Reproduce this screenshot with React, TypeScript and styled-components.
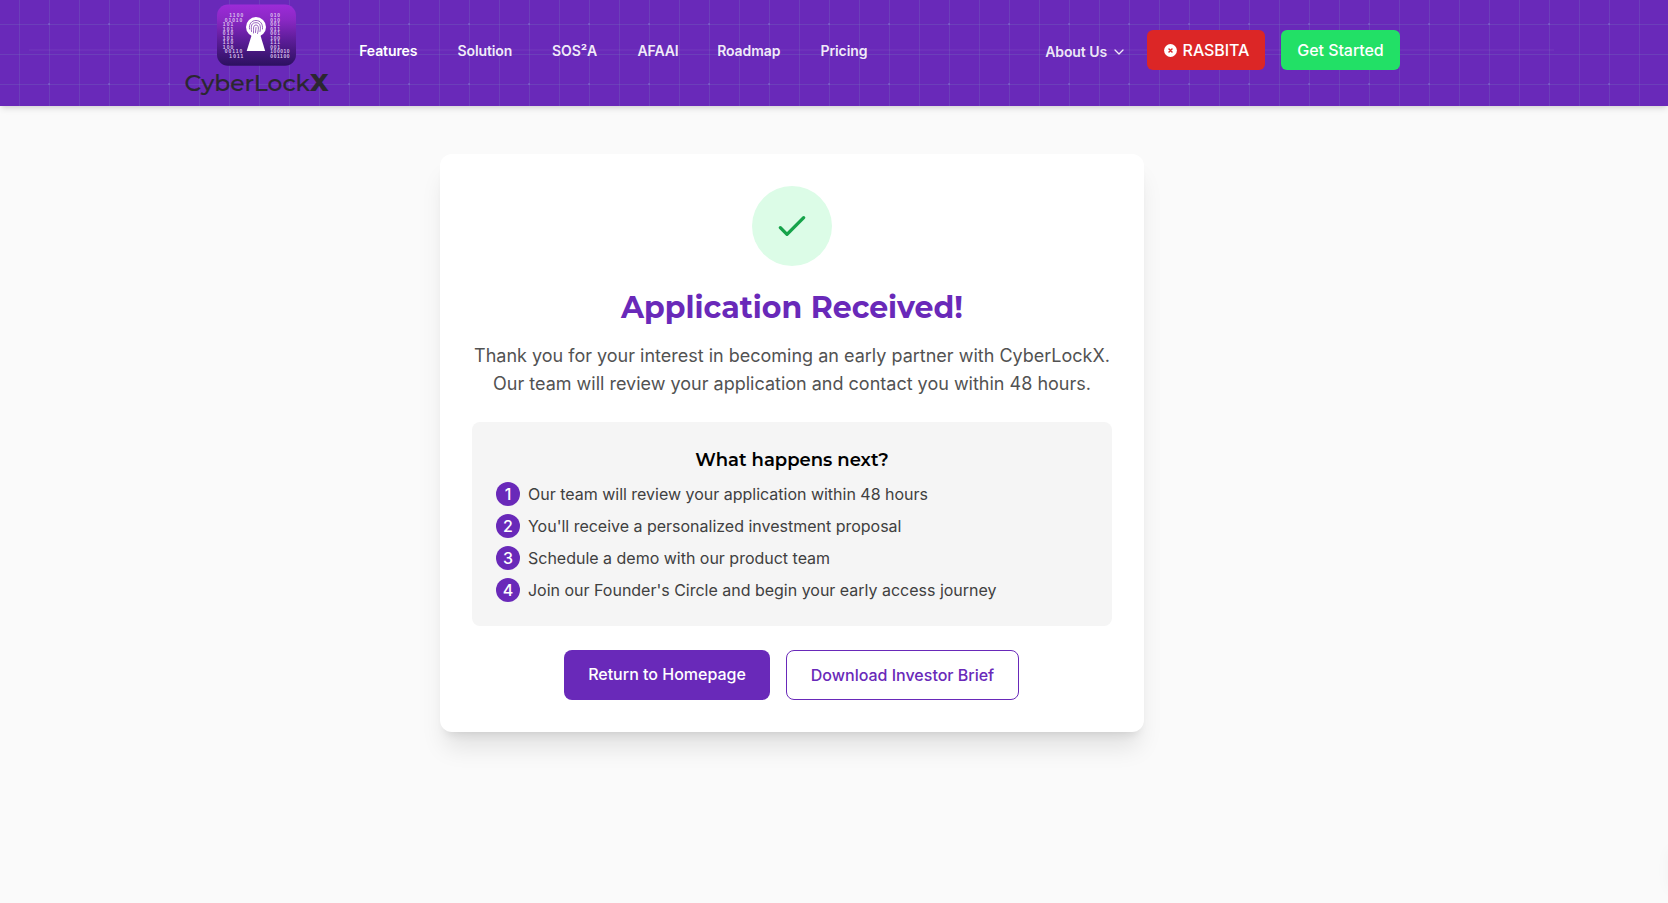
import React from 'react';
import styled, { createGlobalStyle } from 'styled-components';

const Global = createGlobalStyle`
  *, *::before, *::after { box-sizing: border-box; }
  body { margin: 0; background: #fafafa; font-family: Inter, 'Liberation Sans', sans-serif; color: #000; overflow: hidden; }
  a { color: inherit; text-decoration: none; }
`;

const Page = styled.div`
  min-height: 903px;
`;

const Header = styled.header`
  height: 106px;
  background-color: #6929b9;
  background-image:
    linear-gradient(rgba(255, 255, 255, 0.035), rgba(255, 255, 255, 0.035)),
    linear-gradient(to right, rgba(120, 150, 190, 0.2) 1px, transparent 1px),
    linear-gradient(to bottom, rgba(120, 150, 190, 0.2) 1px, transparent 1px);
  background-size: 1525px 2px, 30px 30px, 30px 30px;
  background-position: 29px 49px, 19px 24px, 19px 24px;
  background-repeat: no-repeat, repeat, repeat;
  box-shadow: 0 4px 6px -1px rgba(0, 0, 0, 0.1), 0 2px 4px -2px rgba(0, 0, 0, 0.1);
`;

const Dots = styled.div`
  height: 106px;
  background-image: conic-gradient(from 0deg at 2px 2px, transparent 270deg, rgba(150, 150, 230, 0.27) 270deg);
  background-size: 60px 60px;
  background-position: 48px 23px;
`;

const Bar = styled.div`
  width: 1280px;
  height: 106px;
  margin-left: 152px;
  padding: 0 32px;
  display: flex;
  align-items: flex-start;
`;

const LogoMark = styled.svg`
  display: block;
  flex: none;
`;

const Nav = styled.nav`
  display: flex;
  gap: 40px;
  margin-left: 29px;
  padding-top: 41px;
`;

const NavLink = styled.a<{ $w: number; $active?: boolean }>`
  width: ${(p) => p.$w}px;
  font-size: 14px;
  line-height: 20px;
  font-weight: 600;
  letter-spacing: -0.1px;
  text-align: center;
  white-space: nowrap;
  color: ${(p) => (p.$active ? '#fff' : 'rgba(255, 255, 255, 0.92)')};
`;

const Actions = styled.div`
  display: flex;
  margin-left: auto;
  align-items: center;
  padding-top: 30px;
`;

const About = styled.a`
  display: flex;
  align-items: center;
  gap: 6px;
  margin: 3px 22px 0 0;
  font-size: 14px;
  line-height: 20px;
  font-weight: 600;
  letter-spacing: -0.08px;
  color: rgba(255, 255, 255, 0.9);
`;

const HeaderButton = styled.a<{ $bg: string; $w: number }>`
  display: flex;
  align-items: center;
  justify-content: center;
  gap: 6px;
  width: ${(p) => p.$w}px;
  height: 40px;
  border-radius: 6px;
  background: ${(p) => p.$bg};
  color: #fff;
  font-size: 16px;
  font-weight: 500;
  letter-spacing: -0.06px;
  white-space: nowrap;
  & + & { margin-left: 16px; }
`;

const ClearIcon = styled.svg`
  flex: none;
  margin-left: 1px;
`;

const Main = styled.main`
  width: 704px;
  margin: 48px 0 0 440px;
`;

const Card = styled.section`
  background: #fff;
  border-radius: 12px;
  padding: 32px;
  height: 578px;
  display: flex;
  flex-direction: column;
  align-items: center;
  box-shadow: 0 20px 25px -5px rgba(0, 0, 0, 0.1), 0 8px 10px -6px rgba(0, 0, 0, 0.1);
`;

const Success = styled.div`
  width: 80px;
  height: 80px;
  border-radius: 50%;
  background: #dcfce7;
  display: flex;
  align-items: center;
  justify-content: center;
  margin-bottom: 24px;
`;

const Title = styled.h1`
  margin: 0 0 16px;
  font-family: Montserrat, Inter, sans-serif;
  font-size: 30px;
  line-height: 36px;
  font-weight: 700;
  color: #6929b9;
  white-space: nowrap;
`;

const Lead = styled.p`
  margin: 0 0 24px;
  font-size: 18px;
  line-height: 28px;
  color: #525252;
  text-align: center;
  white-space: nowrap;
`;

const Next = styled.div`
  width: 640px;
  height: 204px;
  background: #f5f5f5;
  border-radius: 8px;
  padding: 24px;
  margin-bottom: 24px;
`;

const NextTitle = styled.h2`
  margin: 0 0 8px;
  font-family: Montserrat, Inter, sans-serif;
  font-size: 18px;
  line-height: 28px;
  font-weight: 600;
  text-align: center;
`;

const Steps = styled.ul`
  list-style: none;
  margin: 0;
  padding: 0;
  display: flex;
  flex-direction: column;
  gap: 8px;
`;

const Step = styled.li`
  display: flex;
  gap: 8px;
  font-size: 16px;
  line-height: 24px;
  letter-spacing: -0.01px;
  color: #404040;
`;

const Badge = styled.span`
  width: 24px;
  height: 24px;
  border-radius: 50%;
  background: #6929b9;
  color: #fff;
  font-weight: 500;
  text-align: center;
`;

const Buttons = styled.div`
  display: flex;
  align-self: flex-start;
  margin-left: 92px;
  gap: 16px;
`;

const Button = styled.a<{ $outline?: boolean; $w: number }>`
  width: ${(p) => p.$w}px;
  height: 50px;
  padding: 12px 0;
  border-radius: 8px;
  border: ${(p) => (p.$outline ? '1px solid #6929b9' : '0')};
  background: ${(p) => (p.$outline ? '#fff' : '#6929b9')};
  color: ${(p) => (p.$outline ? '#6929b9' : '#fff')};
  font-size: 16px;
  line-height: 24px;
  font-weight: 500;
  text-align: center;
  white-space: nowrap;
`;

const DrawerEdge = styled.div`
  position: fixed;
  left: 1669px;
  top: 850px;
  width: 40px;
  height: 40px;
  box-shadow: 0 0 15px rgba(0, 0, 0, 0.04);
`;

const left = ['1100', '01010', '101', '101', '010', '101', '110', '100', '00110', '1011'];
const leftX = [229.3, 224.8, 222.8, 222.8, 222.8, 222.8, 222.8, 222.8, 224.8, 229.3];
const right = ['010', '010', '001', '011', '001', '100', '111', '001', '100010', '001100'];

const Logo = () => (
  <LogoMark width="146" height="106" viewBox="184 0 146 106">
    <defs>
      <linearGradient id="tile" x1="0" y1="0" x2="0" y2="1">
        <stop offset="0" stopColor="#9d2bd8" />
        <stop offset="0.25" stopColor="#8a28c4" />
        <stop offset="0.6" stopColor="#5a1c96" />
        <stop offset="1" stopColor="#2c1160" />
      </linearGradient>
    </defs>
    <rect x="217" y="4.5" width="79" height="61.3" rx="11" fill="url(#tile)" />
    <g fill="#dcc4ee" fontFamily="'Liberation Sans', sans-serif" fontSize="4.9" fontWeight="700">
      {left.map((t, i) => (
        <text key={i} x={leftX[i]} y={17 + i * 4.5} textLength={t.length * 3.5}>{t}</text>
      ))}
      {right.map((t, i) => (
        <text key={i} x={270.3} y={17 + i * 4.5} textLength={t.length * 3.2}>{t}</text>
      ))}
    </g>
    <circle cx="256" cy="27" r="10" fill="#fff" />
    <path d="M252 34h8l5.2 17h-18.5z" fill="#fff" />
    <g fill="none" stroke="#7d3bb0" strokeWidth="0.8" strokeLinecap="round">
      <path d="M249.5 29c-.8-5 2-8.500 6.500-8.500s7 3.500 6.500 8.500M251.500 31.500c-.7-6 0-8.800 4.500-8.800s5 4 4 8.800M253.500 33c.3-3-.9-8 2.500-8s2.500 5 1.500 8.500M256 27.500l-.5 5" />
    </g>
    <g fill="#2b2730" stroke="#2b2730" fontFamily="Montserrat, Inter, sans-serif">
      <text x="184.500" y="90.500" fontSize="22" fontWeight="500" strokeWidth="0.15" textLength="125.500" lengthAdjust="spacingAndGlyphs">CyberLock</text>
      <text x="310" y="90.500" fontSize="22.500" fontWeight="800" strokeWidth="0" textLength="18.500" lengthAdjust="spacingAndGlyphs">X</text>
    </g>
  </LogoMark>
);

const links: [string, number][] = [
  ['Features', 58.5], ['Solution', 54], ['SOS²A', 46], ['AFAAI', 39.5], ['Roadmap', 63.500], ['Pricing', 46.500],
];

const steps = [
  'Our team will review your application within 48 hours',
  "You'll receive a personalized investment proposal",
  'Schedule a demo with our product team',
  "Join our Founder's Circle and begin your early access journey",
];

export default function App() {
  return (
    <Page>
      <Global />
      <Header>
        <Dots>
          <Bar>
            <Logo />
            <Nav>
              {links.map(([t, w], i) => <NavLink key={t} $w={w} $active={i === 0}>{t}</NavLink>)}
            </Nav>
            <Actions>
              <About>
                About Us
                <svg width="12" height="12" viewBox="0 0 12 12" fill="none" stroke="currentColor" strokeWidth="1.300" strokeLinecap="round" strokeLinejoin="round">
                  <path d="M2 4l4 4 4-4" />
                </svg>
              </About>
              <HeaderButton $bg="#dc2626" $w={118}>
                <ClearIcon width="13" height="13" viewBox="0 0 13 13">
                  <circle cx="6.500" cy="6.500" r="6.400" fill="#fff" />
                  <path d="M5 5l3 3M8 5l-3 3" stroke="#dc2626" strokeWidth="1.500" strokeLinecap="round" />
                </ClearIcon>
                RASBITA
              </HeaderButton>
              <HeaderButton $bg="#22e066" $w={119}>Get Started</HeaderButton>
            </Actions>
          </Bar>
        </Dots>
      </Header>
      <Main>
        <Card>
          <Success>
            <svg width="40" height="40" viewBox="0 0 24 24" fill="none" stroke="#16a34a" strokeWidth="2" strokeLinecap="round" strokeLinejoin="round">
              <path d="M5 13l4 4L19 7" />
            </svg>
          </Success>
          <Title>Application Received!</Title>
          <Lead>
            Thank you for your interest in becoming an early partner with CyberLockX.
            <br />
            Our team will review your application and contact you within 48 hours.
          </Lead>
          <Next>
            <NextTitle>What happens next?</NextTitle>
            <Steps>
              {steps.map((t, i) => (
                <Step key={t}><Badge>{i + 1}</Badge><span>{t}</span></Step>
              ))}
            </Steps>
          </Next>
          <Buttons>
            <Button $w={206}>Return to Homepage</Button>
            <Button $outline $w={233}>Download Investor Brief</Button>
          </Buttons>
        </Card>
      </Main>
      <DrawerEdge />
    </Page>
  );
}
